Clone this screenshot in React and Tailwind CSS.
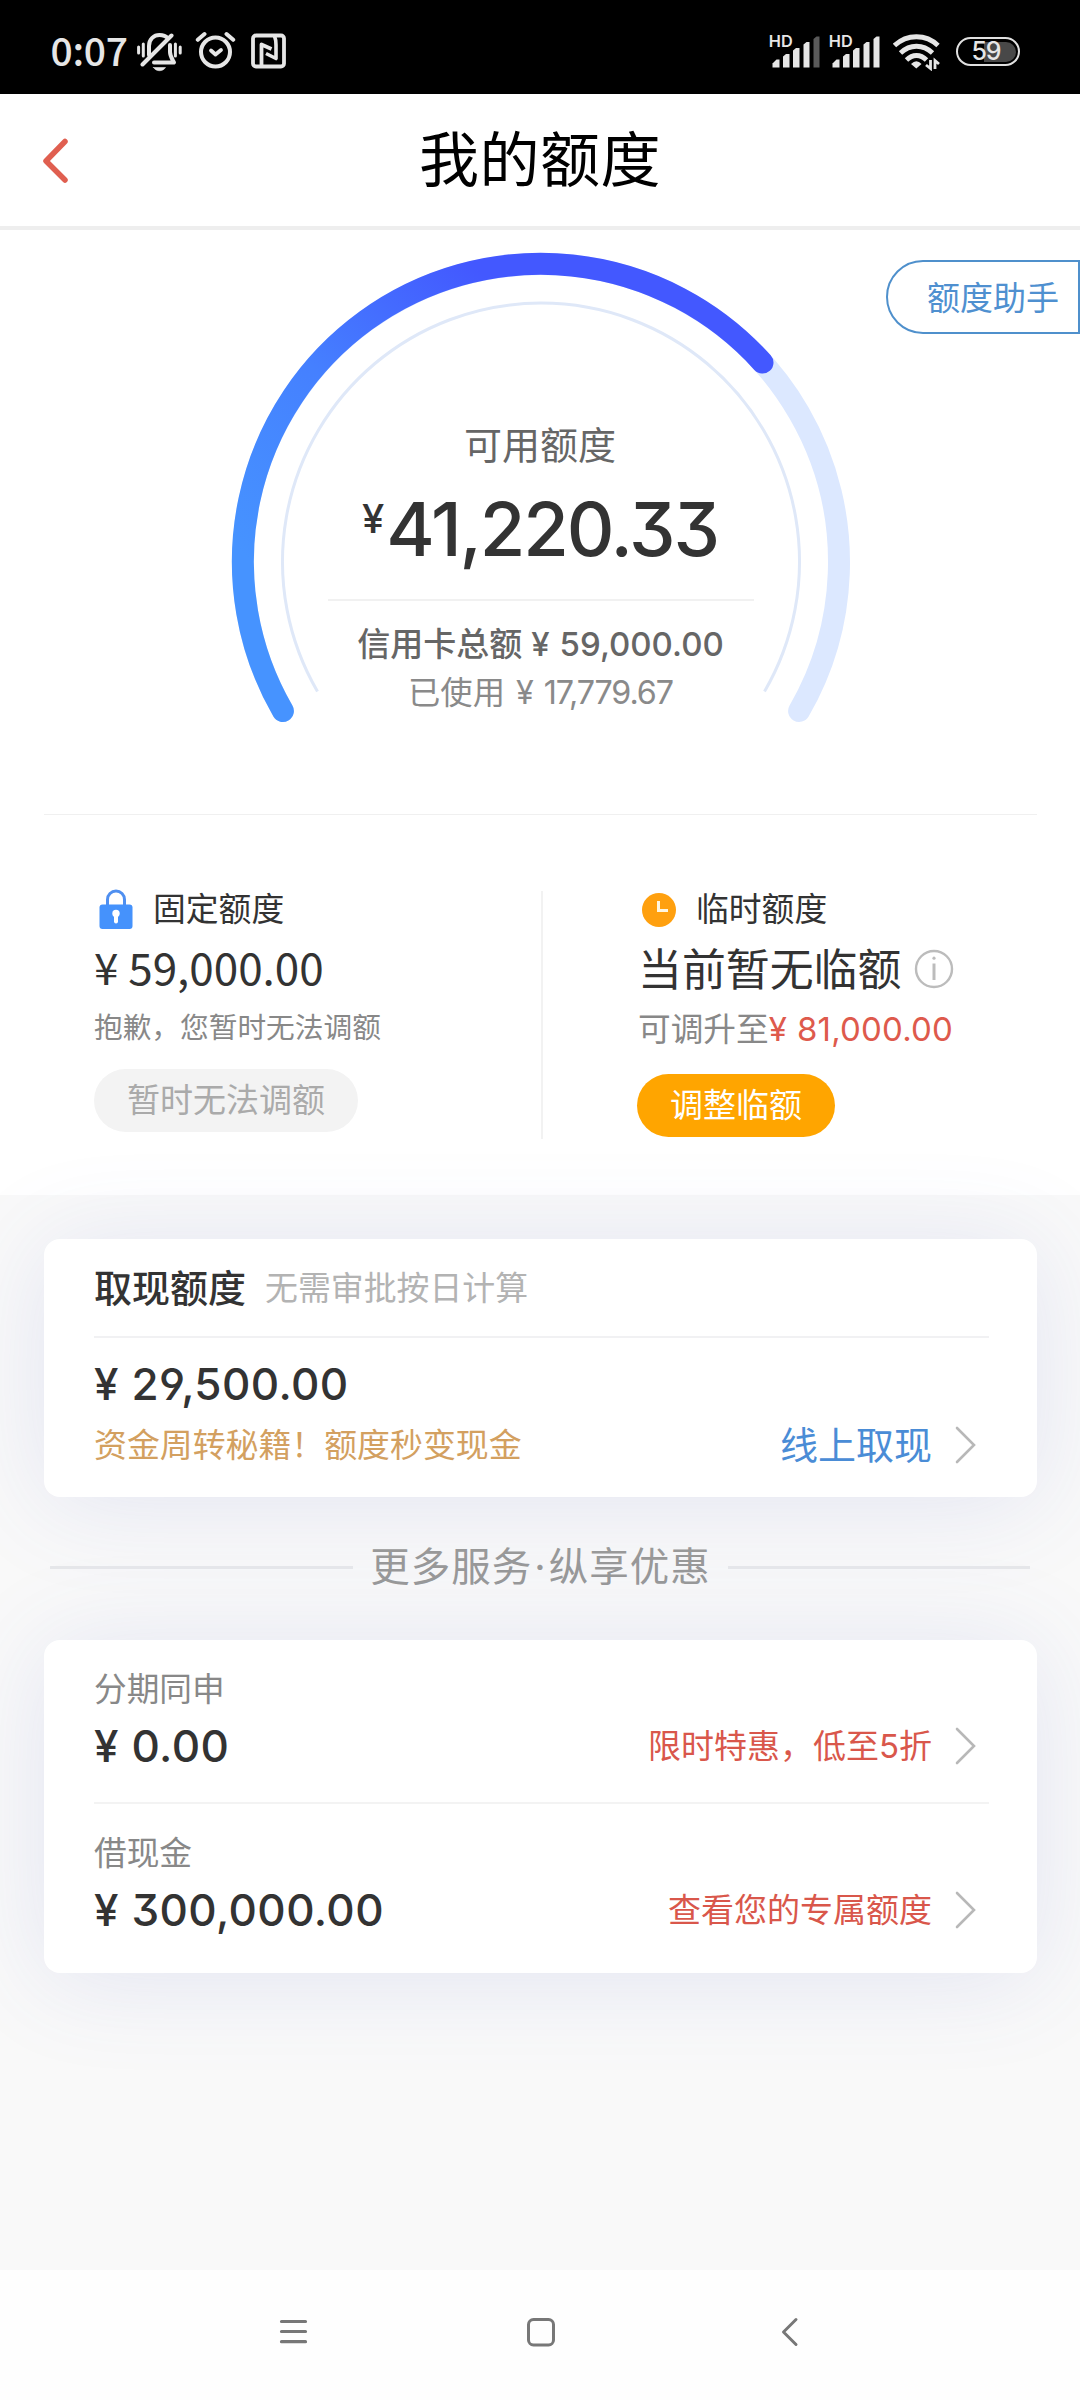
import React from 'react';

const FONT = "font-['Inter','Noto_Sans_CJK_SC',sans-serif]";
const FONT_CJK = "font-['Noto_Sans_CJK_SC',sans-serif]";

function MutedBell() {
  return (
    <svg width="45" height="40" viewBox="0 0 45 40" fill="none" stroke="#e6e6e6" strokeLinecap="round" strokeLinejoin="round" className="shrink-0">
      <path d="M1.6 14v6M6.300 11v12M38.400 11v12M43.200 14v6" strokeWidth="3" />
      <path d="M12 22V13C12 6 17 2 22.500 2C26 2 29 3.200 31 5.500" strokeWidth="4" />
      <path d="M34.500 2.500L5.500 31.500" strokeWidth="4" />
      <path d="M33 12v7c0 4 1.500 6 4 10.500H17" strokeWidth="4" />
      <path d="M16.500 34.500h12c-1.500 2.300-3.600 3.200-6 3.200s-4.500-.9-6-3.200z" fill="#e6e6e6" strokeWidth=".6" />
    </svg>
  );
}

function AlarmClock() {
  return (
    <svg width="41" height="40" viewBox="0 0 41 40" fill="none" stroke="#e6e6e6" strokeLinecap="round" strokeLinejoin="round" className="shrink-0">
      <circle cx="20.500" cy="21" r="14.500" strokeWidth="4" />
      <path d="M16 19.500l4.500 4 5.500-4.500" strokeWidth="3.800" />
      <path d="M2.800 8.800L9.500 3M38.200 8.800L31.500 3" strokeWidth="4" />
    </svg>
  );
}

function NfcIcon() {
  return (
    <svg width="36" height="36" viewBox="0 0 36 36" fill="none" stroke="#e6e6e6" strokeLinejoin="round" className="shrink-0">
      <rect x="2" y="2.500" width="31" height="31" rx="3" strokeWidth="3.800" />
      <path d="M10.500 34V11.500L20.500 16" strokeWidth="3.800" />
      <path d="M15 20.500L25 25.500V12c0-4-.5-6.500-1.500-9" strokeWidth="3.600" />
    </svg>
  );
}

function Signal({ lastDim }) {
  return (
    <svg width="53" height="38" viewBox="-2 -2 53 38" className="shrink-0 overflow-visible">
      <g fill="#e6e6e6">
        <text x="-1.200" y="12.700" fontSize="16.300" fontWeight="600" fontFamily="Inter, sans-serif">HD</text>
        <path d="M2.500 29.500l4-4h3v8h-7z" />
        <path d="M13 22.500l3-2.500h3.500v13.500H13z" />
        <path d="M23 16.500l3-2.500h3.500v19.500H23z" />
        <path d="M33.500 10.500l3-2.500h3v25.500h-6z" />
        <path d="M43.500 5l3-2.500h3v31h-6z" fill={lastDim ? '#5a5a5a' : '#e6e6e6'} />
      </g>
    </svg>
  );
}

function WifiIcon() {
  return (
    <svg width="48" height="38" viewBox="0 0 48 38" fill="none" stroke="#e6e6e6" strokeWidth="4.800" className="shrink-0">
      <path d="M1.500 12.500C14 .8 33 .8 45 12.500" />
      <path d="M7.500 20C17 11 30 11 39.500 20" />
      <path d="M13.500 27C19.500 21 27.500 21 33.500 27" />
      <path d="M18 31q5.500-5.500 10.500 0l-5.200 4.500z" fill="#e6e6e6" stroke="none" />
      <path d="M37.500 27v8.500l-4.500-3.500M42 36V27.500l4 3.500" strokeWidth="2.800" />
    </svg>
  );
}

function StatusBar() {
  return (
    <div className="flex h-[94px] items-start bg-black text-[#e6e6e6]">
      <div className={`${FONT_CJK} ml-[50.500px] mt-[28px] h-12 w-[85px] text-[39px] leading-[42px] font-medium tracking-[-0.3px] whitespace-nowrap`}>0:07</div>
      <div className="ml-px mt-[33px]"><MutedBell /></div>
      <div className="ml-[13px] mt-[31px]"><AlarmClock /></div>
      <div className="ml-[15px] mt-[33px]"><NfcIcon /></div>
      <div className="ml-auto flex items-start pr-[60px]">
        <div className="mt-[32px]"><Signal lastDim /></div>
        <div className="mt-[32px] ml-[7px]"><Signal /></div>
        <div className="mt-[33px] ml-[12px]"><WifiIcon /></div>
        <div className="mt-[37px] ml-[15px] flex h-[29px] w-[64px] items-center rounded-full border-[2.500px] border-[#e0e0e0] p-[2.500px]">
          <div className="flex h-full w-full items-center justify-center rounded-full bg-[linear-gradient(90deg,#000_42%,#484848_42%)] pr-1 text-[25px] leading-none font-medium tracking-[-1px]">59</div>
        </div>
      </div>
    </div>
  );
}

function Header() {
  return (
    <div className="relative flex h-[136px] items-center justify-center border-b-4 border-[#eeeeee] bg-white">
      <svg width="30" height="50" viewBox="0 0 30 50" className="absolute left-[41px] top-[42px]" fill="none" stroke="#e05f50" strokeWidth="5.500" strokeLinecap="round" strokeLinejoin="round">
        <path d="M24 5.500L5 25L24 44" />
      </svg>
      <h1 className="text-[60px] leading-[64px] font-normal tracking-[0.5px] text-black">我的额度</h1>
    </div>
  );
}

function Gauge() {
  return (
    <div className="grid w-[640px] grid-cols-1">
      <svg width="640" height="494" viewBox="221 240 640 494" fill="none" className="[grid-area:1/1]">
        <defs>
          <linearGradient id="progress" gradientUnits="userSpaceOnUse" x1="250" y1="560" x2="500" y2="290">
            <stop offset="0" stopColor="#4693ff" />
            <stop offset=".5" stopColor="#4580ff" />
            <stop offset="1" stopColor="#4358ff" />
          </linearGradient>
        </defs>
        <path d="M282.900 711A298 298 0 1 1 799.100 711" stroke="#dce8ff" strokeWidth="22" strokeLinecap="round" />
        <path d="M282.900 711A298 298 0 0 1 762.500 362.600" stroke="url(#progress)" strokeWidth="22" strokeLinecap="round" />
        <path d="M317.500 691.500A258.500 258.500 0 1 1 764.500 691.500" stroke="#dfe8f8" strokeWidth="3" />
      </svg>
      <div className="flex flex-col items-center whitespace-nowrap [grid-area:1/1]">
        <div className="mt-[185px] -ml-[2px] h-10 text-[38px] leading-10 text-[#666666]">可用额度</div>
        <div className="mt-6 -ml-[2px] flex h-20 items-start font-medium text-[#333333]">
          <span className="mt-[7px] text-[40px] leading-[46px]">¥</span>
          <span className="ml-[2px] text-[74px] leading-20 tracking-[-2.100px] [font-feature-settings:'cv09','cv04']">41,220.33</span>
        </div>
        <div className="mt-[30px] -ml-[1px] h-[2px] w-[426px] bg-[#f1f1f1]" />
        <div className="mt-[23px] -ml-[1px] flex h-10 items-center text-[33px] leading-10 font-medium text-[#666666]">
          <span>信用卡总额</span><span className="ml-[9px]">¥</span><span className="ml-[10px]">59,000.00</span>
        </div>
        <div className="mt-[9px] -ml-[1px] flex h-10 items-center text-[32.300px] leading-10 text-[#8a8a8a]">
          <span>已使用</span><span className="ml-[11px]">¥</span><span className="ml-[10px] tracking-[-1.100px]">17,779.67</span>
        </div>
      </div>
    </div>
  );
}

function LockIcon() {
  return (
    <svg width="34" height="41" viewBox="0 0 34 41" className="shrink-0">
      <path d="M8.500 16V10.500a8.500 8.500 0 0 1 17 0V16" fill="none" stroke="#4f8ff0" strokeWidth="3" />
      <rect x=".5" y="15.500" width="33" height="24.500" rx="3" fill="#4592fc" />
      <circle cx="17" cy="24.500" r="3.700" fill="#fff" />
      <path d="M15 26h4v6.500a2 2 0 0 1-4 0z" fill="#fff" />
    </svg>
  );
}

function QuotaColumns() {
  return (
    <div className="flex h-[380px] bg-white whitespace-nowrap">
      <div className="w-[541px] pl-[94px] pt-[71px]">
        <div className="flex h-[46px] items-center">
          <div className="ml-[5px]"><LockIcon /></div>
          <span className="ml-[20px] text-[32.800px] leading-[46px] text-[#333333]">固定额度</span>
        </div>
        <div className={`${FONT_CJK} mt-1 h-[60px] text-[44px] leading-[60px] text-[#333333]`}>¥ 59,000.00</div>
        <div className="mt-[12px] h-10 text-[28.700px] leading-10 text-[#888888]">抱歉，您暂时无法调额</div>
        <button className="mt-[21px] flex h-[63px] w-[264px] items-center justify-center rounded-full bg-[#f3f3f3] pb-px text-[33px] leading-10 text-[#aaaaaa]">暂时无法调额</button>
      </div>
      <div className="mt-[76px] h-[248px] w-[2px] bg-[#f2f2f2]" />
      <div className="pl-[95px] pt-[71px]">
        <div className="flex h-[46px] items-center">
          <svg width="36" height="36" viewBox="0 0 36 36" className="ml-[3px] mt-[1px]">
            <circle cx="18" cy="18" r="17" fill="#ffa00f" />
            <path d="M17.500 9v9.500H27" fill="none" stroke="#fff6e0" strokeWidth="3" />
          </svg>
          <span className="ml-[19px] text-[32.800px] leading-[46px] text-[#333333]">临时额度</span>
        </div>
        <div className="mt-2 flex h-[60px] items-center">
          <span className="text-[43.900px] leading-[60px] text-[#333333]">当前暂无临额</span>
          <svg width="40" height="40" viewBox="0 0 40 40" className="mb-[2px] ml-[13px]" fill="none" stroke="#bcbcbc">
            <circle cx="20" cy="20" r="18" strokeWidth="2.400" />
            <path d="M20 14.500v16.500" strokeWidth="3" />
            <circle cx="20" cy="9.200" r="1.600" fill="#bcbcbc" stroke="none" />
          </svg>
        </div>
        <div className="mt-[9px] flex h-10 items-center text-[33px] leading-10 text-[#888888]">
          <span className="text-[32.700px]">可调升至</span>
          <span className="text-[#de5a4c]">¥</span><span className="ml-[10px] tracking-[0.200px] text-[#de5a4c]">81,000.00</span>
        </div>
        <button className="mt-[25px] -ml-[1px] flex h-[63px] w-[198px] items-center justify-center rounded-full bg-[#ffa500] pb-px text-[33px] leading-10 text-white">调整临额</button>
      </div>
    </div>
  );
}

function Money({ value }) {
  return (
    <div className="flex h-[46px] items-center text-[44px] leading-[46px] font-medium text-[#333333]">
      <span>¥</span><span className="ml-[13px] tracking-[0.400px] [font-feature-settings:'cv09','cv04']">{value}</span>
    </div>
  );
}

function Chevron() {
  return (
    <svg width="22" height="38" viewBox="0 0 22 38" className="ml-[23px] mr-[12px] shrink-0" fill="none" stroke="#b8b8b8" strokeWidth="2.600" strokeLinecap="round">
      <path d="M2 2L19 19L2 36" />
    </svg>
  );
}

const CARD = 'ml-11 mr-[43px] rounded-[16px] bg-white pl-[50px] pr-[48px] whitespace-nowrap shadow-[0_6px_100px_rgba(80,95,190,0.13)]';

function CashCard() {
  return (
    <div className={`${CARD} mt-11 h-[258px]`}>
      <div className="flex h-[97px] items-center">
        <span className="text-[38px] leading-10 font-medium text-[#333333]">取现额度</span>
        <span className="ml-[19px] text-[32.900px] leading-10 text-[#b3b3b3]">无需审批按日计算</span>
      </div>
      <div className="h-[2px] bg-[#f1f1f3]" />
      <div className="mt-[23px]"><Money value="29,500.00" /></div>
      <div className="mt-[18px] flex h-10 items-center justify-between">
        <span className="text-[32.900px] leading-10 text-[#d3a060]">资金周转秘籍！额度秒变现金</span>
        <span className="flex items-center text-[38px] leading-10 text-[#4a8cd6]">线上取现<Chevron /></span>
      </div>
    </div>
  );
}

function MoreServices() {
  return (
    <div className="mt-[50px] flex h-10 items-center justify-between pr-[50px] pl-[50px]">
      <div className="h-[3px] w-[303px] bg-[#e6e7ea]" />
      <span className="text-[39.500px] leading-10 tracking-[1px] whitespace-nowrap text-[#999999]">更多服务<span className="mx-[2px]">·</span>纵享优惠</span>
      <div className="h-[3px] w-[302px] bg-[#e6e7ea]" />
    </div>
  );
}

function ServiceRow({ label, value, offer }) {
  return (
    <div className="pt-[29px]">
      <div className="h-10 text-[32.700px] leading-10 text-[#888888]">{label}</div>
      <div className="mt-[14px] flex h-[46px] items-center justify-between">
        <Money value={value} />
        <span className="flex items-center text-[33px] leading-10 text-[#d9574b]">{offer}<Chevron /></span>
      </div>
    </div>
  );
}

function ServicesCard() {
  return (
    <div className={`${CARD} mt-[53px] h-[333px]`}>
      <div className="h-[162px]"><ServiceRow label="分期同申" value="0.00" offer="限时特惠，低至5折" /></div>
      <div className="h-[2px] bg-[#f3f3f3]" />
      <ServiceRow label="借现金" value="300,000.00" offer="查看您的专属额度" />
    </div>
  );
}

function SystemNav() {
  return (
    <div className="flex h-[130px] items-start bg-[#fefefe] pt-[44px]">
      <svg width="36" height="36" viewBox="0 0 36 36" className="ml-[275px]" stroke="#777777" strokeWidth="3.200" strokeLinecap="round">
        <path d="M6.500 7.500h24M6.500 17.500h24M6.500 27.700h24" />
      </svg>
      <svg width="36" height="36" viewBox="0 0 36 36" className="ml-[212px]" fill="none" stroke="#777777" strokeWidth="3">
        <rect x="5.500" y="5.500" width="25" height="25.500" rx="5" />
      </svg>
      <svg width="36" height="36" viewBox="0 0 36 36" className="ml-[212px]" fill="none" stroke="#777777" strokeWidth="3" strokeLinecap="round" strokeLinejoin="round">
        <path d="M25 5.500L12.500 18L25 30.500" />
      </svg>
    </div>
  );
}

export default function App() {
  return (
    <div className={`${FONT} flex h-[2400px] w-[1080px] flex-col overflow-hidden bg-[#f9f9f9]`}>
      <StatusBar />
      <Header />
      <div className="relative flex h-[584px] justify-center bg-white pt-[10px] pl-[2px]">
        <Gauge />
        <button className="absolute top-[30px] right-0 flex h-[74px] w-[194px] items-center rounded-l-full border-2 border-[#4f90cc] pt-[2px] pl-[39px] text-[33px] leading-10 text-[#4f90d0]">额度助手</button>
      </div>
      <div className="bg-white pr-[43px] pl-11"><div className="-mt-px h-[2px] bg-[#f0f0f0]" /></div>
      <QuotaColumns />
      <CashCard />
      <MoreServices />
      <ServicesCard />
      <div className="grow" />
      <SystemNav />
    </div>
  );
}
